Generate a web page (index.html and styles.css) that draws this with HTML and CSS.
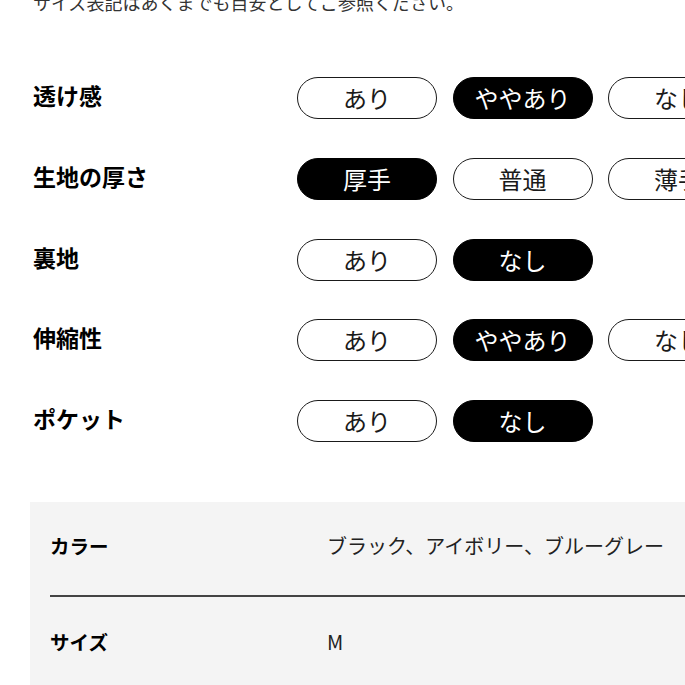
FILE: index.html
```html
<!DOCTYPE html>
<html lang="ja">
<head>
<meta charset="utf-8">
<link rel="stylesheet" href="styles.css">
</head>
<body>
<p class="note">サイズ表記はあくまでも目安としてご参照ください。</p>
<div class="specs">
  <div class="row">
    <div class="label">透け感</div>
    <div class="pills">
      <span class="pill">あり</span>
      <span class="pill on">ややあり</span>
      <span class="pill">なし</span>
    </div>
  </div>
  <div class="row">
    <div class="label">生地の厚さ</div>
    <div class="pills">
      <span class="pill on">厚手</span>
      <span class="pill">普通</span>
      <span class="pill">薄手</span>
    </div>
  </div>
  <div class="row">
    <div class="label">裏地</div>
    <div class="pills">
      <span class="pill">あり</span>
      <span class="pill on">なし</span>
    </div>
  </div>
  <div class="row">
    <div class="label">伸縮性</div>
    <div class="pills">
      <span class="pill">あり</span>
      <span class="pill on">ややあり</span>
      <span class="pill">なし</span>
    </div>
  </div>
  <div class="row">
    <div class="label">ポケット</div>
    <div class="pills">
      <span class="pill">あり</span>
      <span class="pill on">なし</span>
    </div>
  </div>
</div>
<div class="info">
  <div class="info-row">
    <div class="info-label">カラー</div>
    <div class="info-value">ブラック、アイボリー、ブルーグレー</div>
  </div>
  <div class="info-row">
    <div class="info-label">サイズ</div>
    <div class="info-value">M</div>
  </div>
</div>
</body>
</html>
```

FILE: styles.css
```css
html, body {
  margin: 0;
  padding: 0;
  overflow: hidden;
  background: #fff;
}
body {
  font-family: "Noto Sans CJK JP", "Noto Sans", sans-serif;
  color: #111;
  width: 685px;
  height: 685px;
}
.note {
  margin: -11px 0 0 33px;
  font-size: 18px;
  line-height: 26px;
  color: #333;
  white-space: nowrap;
}
.specs {
  margin-top: 62px;
  padding-left: 33px;
  display: flex;
  flex-direction: column;
  gap: 38.75px;
}
.row {
  display: flex;
  align-items: center;
  height: 42px;
}
.label {
  width: 264px;
  flex: none;
  font-size: 23px;
  font-weight: 700;
  line-height: 30px;
  margin-bottom: 6px;
  color: #000;
}
.pills {
  display: flex;
  gap: 15.5px;
  flex: none;
}
.pill {
  box-sizing: border-box;
  width: 140px;
  height: 42px;
  border: 1.6px solid #1a1a1a;
  border-radius: 21px;
  display: flex;
  align-items: center;
  justify-content: center;
  font-size: 24px;
  line-height: 1;
  color: #1a1a1a;
  background: #fff;
  flex: none;
}
.pill.on {
  background: #000;
  border-color: #000;
  color: #fff;
}
.info {
  margin: 60px 0 0 30px;
  background: #f4f4f4;
  padding-left: 20px;
  height: 200px;
}
.info-row {
  box-sizing: border-box;
  display: flex;
  align-items: center;
  height: 95px;
  padding-bottom: 6px;
  border-bottom: 2px solid #444;
}
.info-row:last-child {
  border-bottom: none;
}
.info-label {
  width: 277px;
  flex: none;
  font-size: 19.5px;
  font-weight: 700;
  color: #000;
}
.info-value {
  font-size: 20px;
  color: #222;
  white-space: nowrap;
}
```
